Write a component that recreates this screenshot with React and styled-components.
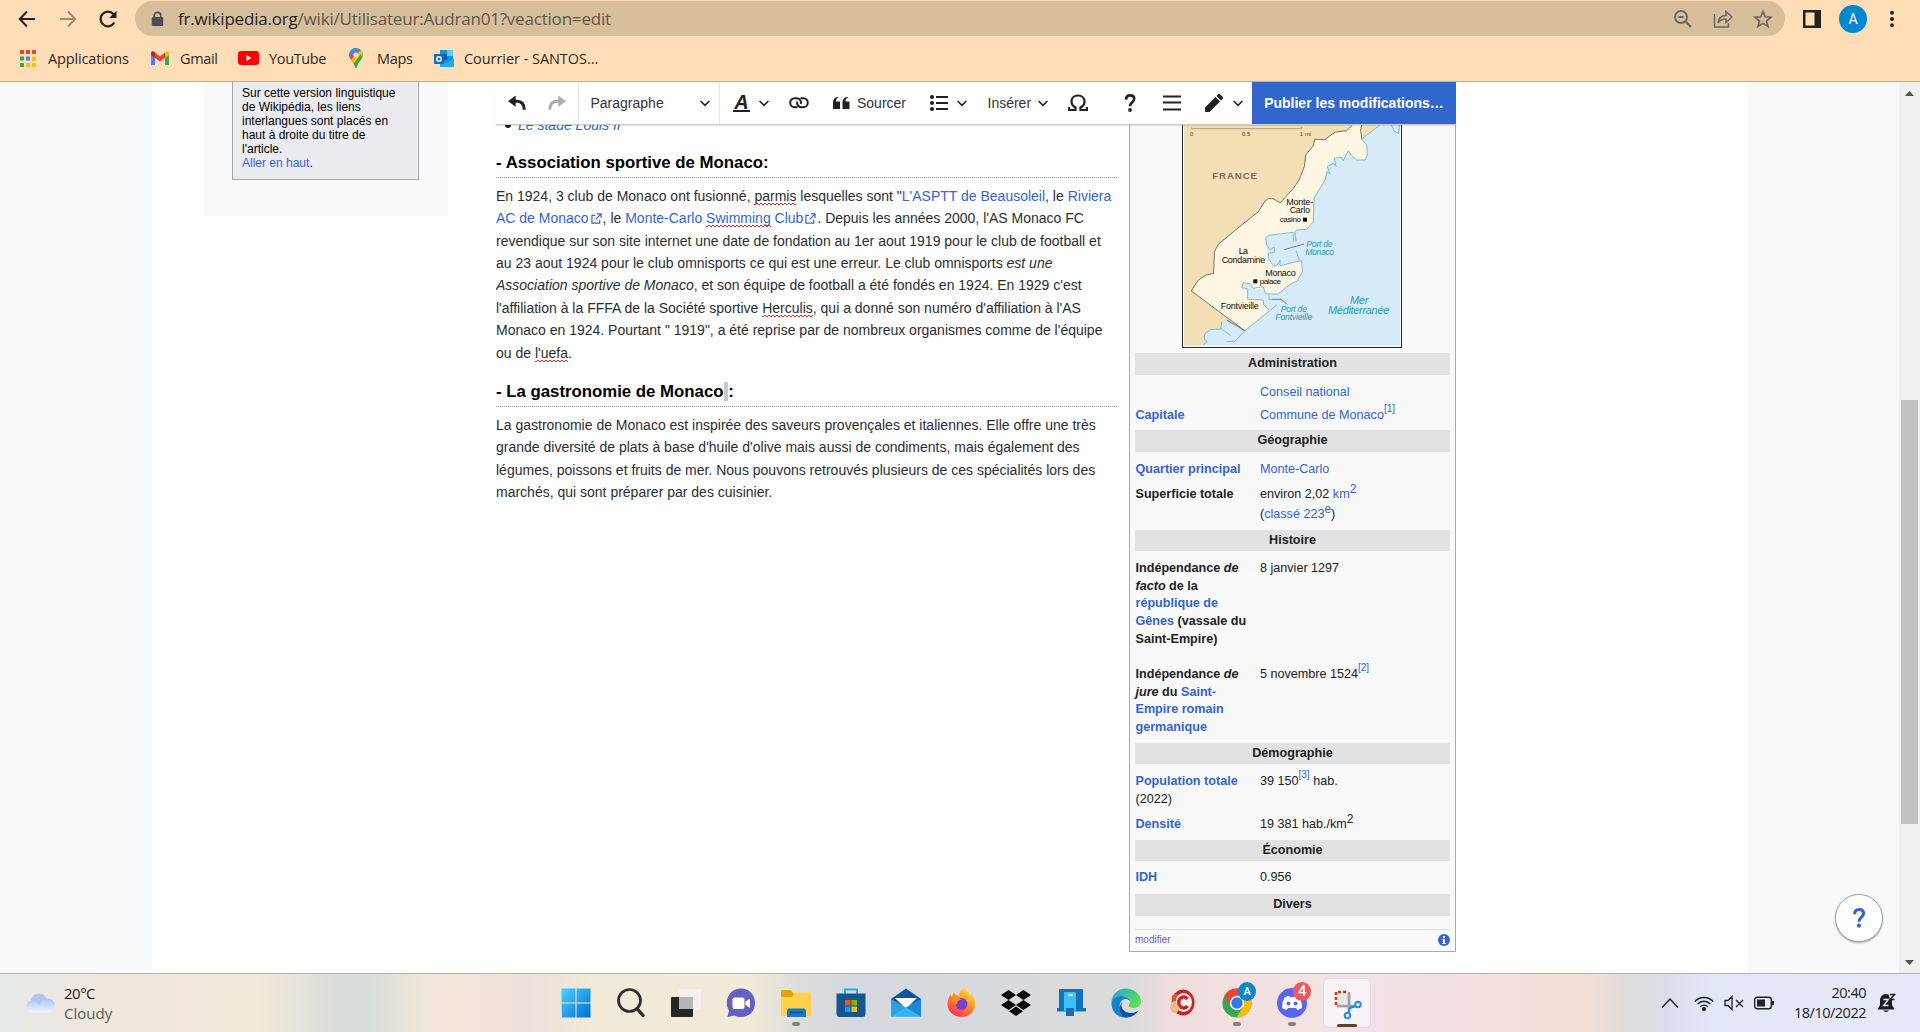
import React from "react";
import styled, { createGlobalStyle, css } from "styled-components";

const GlobalStyle = createGlobalStyle`
  * { box-sizing: border-box; }
  html, body { margin: 0; padding: 0; overflow: hidden; }
  body { font-family: "Liberation Sans", Arial, sans-serif; color: #202122; }
  svg { display: block; flex: none; }
`;

const ui = css`font-family: "Open Sans", "Noto Sans", sans-serif;`;

const Screen = styled.div`
  width: 1920px;
  height: 1032px;
  display: flex;
  flex-direction: column;
  overflow: hidden;
  background: #fff;
`;

/* ---------- Browser chrome ---------- */
const Chrome = styled.header`
  ${ui}
  flex: none;
  height: 82px;
  background: #ffdeb7;
  border-bottom: 1px solid #c9ae8b;
  display: flex;
  flex-direction: column;
`;
const NavBar = styled.div`
  display: flex;
  align-items: center;
  height: 37px;
  padding: 1px 0 1px 7px;
`;
const NavButton = styled.div`
  width: ${(p) => p.$w || 40.5}px;
  flex: none;
  display: flex;
  justify-content: center;
`;
const AddressBar = styled.div`
  display: flex;
  align-items: center;
  flex: none;
  width: 1650px;
  height: 35px;
  margin-left: 6.5px;
  padding: 0 12px 0 15px;
  border-radius: 18px;
  background: #d8bf9c;
`;
const Url = styled.div`
  margin-left: 13px;
  flex: 1;
  font-size: 17px;
  line-height: 34px;
  letter-spacing: ${(p) => p.$ls}px;
  color: #5f574c;
  white-space: nowrap;
  b { font-weight: 400; color: #26231f; }
`;
const AddressActions = styled.div`
  display: flex;
  gap: 20px;
`;
const Avatar = styled.div`
  width: ${(p) => p.$s}px;
  height: ${(p) => p.$s}px;
  border-radius: 50%;
  background: #0288d1;
  color: #fff;
  font: 400 ${(p) => p.$f}px/${(p) => p.$s}px Roboto, sans-serif;
  text-align: center;
`;
const Bookmarks = styled.nav`
  display: flex;
  align-items: center;
  height: 42px;
  padding-left: 18px;
`;
const Bookmark = styled.div`
  display: flex;
  align-items: center;
  gap: ${(p) => p.$gap || 10}px;
  width: ${(p) => p.$w}px;
  font-size: 14.5px;
  letter-spacing: ${(p) => p.$ls ?? -0.35}px;
  color: #2d2a26;
  white-space: nowrap;
`;

/* ---------- Page ---------- */
const Viewport = styled.div`
  flex: 1;
  min-height: 0;
  display: flex;
  background: #f8f9fb;
  padding-left: 152px;
`;
const Page = styled.div`
  width: 1596px;
  background: #fff;
  padding-left: 52px;
  display: flex;
  align-items: flex-start;
  overflow: hidden;
`;
const Sidebar = styled.aside`
  width: 244px;
  height: 134px;
  padding: 0 28px;
  background: #f8f9fa;
  margin-right: 48px;
`;
const Notice = styled.div`
  height: 98px;
  width: 187px;
  padding: 4px 9px;
  border: 1px solid #a2a9b1;
  border-top: 0;
  background: #eaecf0;
  color: #000;
  font-size: 12px;
  line-height: 14px;
  white-space: nowrap;
`;
const A = styled.a`color: #3366cc;`;
const Main = styled.main`
  width: 960px;
  height: 891px;
  display: flex;
  flex-direction: column;
`;
const Toolbar = styled.div`
  flex: none;
  display: flex;
  height: 43px;
  background: #fff;
  border-bottom: 1px solid #c8ccd1;
  box-shadow: 0 1px 1px rgba(0, 0, 0, 0.1);
  position: relative;
  z-index: 1;
`;
const Tool = styled.div`
  display: flex;
  align-items: center;
  width: ${(p) => p.$w}px;
  padding-left: ${(p) => p.$l}px;
  padding-right: ${(p) => p.$r || 0}px;
  border-right: ${(p) => (p.$line ? "1px solid #e4e6ea" : "0")};
  font-size: 14px;
  color: #333;
  white-space: nowrap;
  & > .end { margin-left: auto; }
`;
const ToolText = styled.span`margin-left: ${(p) => p.$ml || 0}px;`;
const StyleGlyph = styled.span`
  width: 17px;
  height: 18px;
  border-bottom: 2px solid #202122;
  font: italic 700 20px/16px "Liberation Sans", sans-serif;
  color: #202122;
  text-align: center;
`;
const Publish = styled.button`
  width: 204px;
  height: 42px;
  border: 0;
  padding: 0;
  background: #3366cc;
  color: #fff;
  font: 700 14px/42px "Liberation Sans", sans-serif;
`;
const Content = styled.div`
  display: flex;
  justify-content: space-between;
  align-items: flex-start;
  flex: 1;
  min-height: 0;
  overflow: hidden;
`;
const Article = styled.article`
  width: 621px;
  font-size: 14px;
  line-height: 22.4px;
  white-space: nowrap;
`;
const Bullet = styled.div`
  display: flex;
  align-items: center;
  gap: 7px;
  margin-top: -11px;
  padding-left: 9px;
  font-style: italic;
  &::before { content: ""; width: 6px; height: 6px; border-radius: 50%; background: #202122; }
`;
const Heading = styled.h3`
  margin: ${(p) => p.$top}px 0 0;
  padding-bottom: 1px;
  border-bottom: 1px dotted #8f9399;
  font-size: 16.8px;
  line-height: 27px;
  color: #000;
`;
const Mark = styled.span`background: #c8c8c8;`;
const Para = styled.p`margin: 6.8px 0 0; color: #2c2d2f;`;
const Typo = styled.span`
  padding-bottom: 1px;
  background-image: linear-gradient(90deg, #f02020 50%, transparent 50%), linear-gradient(90deg, transparent 50%, #f02020 50%);
  background-size: 4px 1px, 4px 1px;
  background-position: 0 100%, 0 calc(100% - 1px);
  background-repeat: repeat-x;
`;
const Ext = styled.svg`
  && { display: inline-block; }
  width: 11px;
  height: 11px;
  margin: 0 1px 0 2px;
  vertical-align: -1px;
`;

/* ---------- Infobox ---------- */
const Infobox = styled.section`
  width: 327px;
  height: 827px;
  padding: 0 5px;
  border: 1px solid #a9abae;
  border-top: 0;
  background: #f9f9f9;
  font-size: 12.6px;
  line-height: 17.7px;
  white-space: nowrap;
`;
const MapFrame = styled.div`
  width: 220px;
  height: 223px;
  margin: 0 0 5px 47px;
  overflow: hidden;
  border: 1px solid #1c2b3a;
  border-top: 0;
`;
const Band = styled.h4`
  margin: 0;
  height: ${(p) => p.$h || 21}px;
  background: #e2e2e2;
  font-size: 12.6px;
  line-height: 20px;
  text-align: center;
`;
const Fact = styled.div`
  display: grid;
  grid-template-columns: 124.5px 1fr;
  height: ${(p) => p.$h}px;
  padding: ${(p) => p.$t}px 0 0 0.5px;
  sup { line-height: 0; font-size: ${(p) => (p.$ref ? 10 : 12)}px; vertical-align: ${(p) => (p.$ref ? 7 : 5)}px; }
`;
const Label = styled.div`font-weight: 700;`;
const Plain = styled.span`font-weight: 400;`;
const Second = styled.div`margin-top: 2.5px;`;
const BoxFooter = styled.div`
  display: flex;
  justify-content: space-between;
  align-items: center;
  margin-top: 13px;
  height: 21px;
  border-top: 1px solid #dddfe1;
  font-size: 10px;
  color: #795cb2;
`;

/* ---------- Right edge ---------- */
const RightGutter = styled.div`
  width: 151px;
  display: flex;
  align-items: flex-end;
  justify-content: flex-end;
  padding: 0 16px 31px 0;
`;
const HelpButton = styled.div`
  width: 48px;
  height: 48px;
  border-radius: 50%;
  border: 1px solid #a2a9b1;
  background: #fff;
  box-shadow: 0 1px 2px rgba(0, 0, 0, 0.35);
  display: flex;
  align-items: center;
  justify-content: center;
`;
const Scrollbar = styled.div`
  width: 21px;
  background: #f0f0f0;
  display: flex;
  flex-direction: column;
  align-items: center;
  justify-content: space-between;
  padding: 9px 0 8px;
`;
const Thumb = styled.div`
  width: 17px;
  height: 424px;
  margin-top: 168px;
  background: #c1c1c1;
`;

/* ---------- Taskbar ---------- */
const Taskbar = styled.footer`
  ${ui}
  flex: none;
  height: 59px;
  border-top: 1px solid #b4b3b2;
  background: linear-gradient(90deg, #e5e9ea 0, #ece7e1 60px, #f1e8dc 140px, #f1e9da 260px, #dadeda 335px, #dadeda 370px, #f0e6d9 425px, #f2e4d8 470px, #ece0dc 530px, #f1ead8 590px, #f1ebd8 750px, #dddddd 800px, #d5d8de 860px, #dadcdc 1130px, #efdedd 1170px, #f4e2e1 1300px, #f1e1ee 1350px, #f3e0e2 1400px, #f4ddd7 1590px, #dedddd 1625px, #dadde8 1660px, #e2e7f7 1710px, #e6e9f8 1920px);
  display: grid;
  grid-template-columns: 548px 827px 1fr;
`;
const Weather = styled.div`
  display: flex;
  align-items: center;
  gap: 9px;
  padding: 0 0 1px 25px;
`;
const TwoLine = styled.div`
  font-size: ${(p) => p.$f || 14.5}px;
  line-height: 20px;
  letter-spacing: ${(p) => p.$ls ?? -0.5}px;
  color: #1d1d1d;
  text-align: ${(p) => p.$align || "left"};
  white-space: nowrap;
  span { color: #5c5a58; letter-spacing: 0; }
`;
const Apps = styled.div`
  display: flex;
  height: 58px;
`;
const AppSlot = styled.div`
  width: 55.1px;
  flex: none;
  height: 58px;
  display: flex;
  flex-direction: column;
  align-items: center;
  padding-top: 14px;
  position: relative;
`;
const Running = styled.i`
  width: 8px;
  height: 4px;
  margin-top: 4px;
  border-radius: 2px;
  background: #85817f;
`;
const Badge = styled.div`
  position: absolute;
  left: 29px;
  top: 8px;
  width: 18px;
  height: 19px;
  border-radius: 50%;
  background: ${(p) => p.$bg};
  color: #fff;
  font: 500 ${(p) => p.$f || 12}px/19px Roboto, sans-serif;
  text-align: center;
`;
const ActiveTile = styled.div`
  width: 48px;
  height: 50px;
  margin-top: -10px;
  padding-top: 10px;
  border: 1px solid #e6dbe2;
  border-radius: 5px;
  background: #f8f1f5;
  display: flex;
  flex-direction: column;
  align-items: center;
  &::after { content: ""; width: 20px; height: 4px; border-radius: 2px; margin-top: 5px; background: #5e4519; }
`;
const Tray = styled.div`
  display: flex;
  align-items: center;
  justify-content: flex-end;
  padding-right: 24px;
`;
const TrayIcons = styled.div`
  display: flex;
  align-items: center;
  gap: ${(p) => p.$gap}px;
  margin-right: ${(p) => p.$r}px;
`;

/* ---------- Small drawings ---------- */
const Chevron = (p) => (
  <svg className="end" width="12" height="12" viewBox="0 0 12 12" {...p}>
    <path d="M1.6 4 6 8.4 10.4 4" fill="none" stroke="#202122" strokeWidth="1.6" />
  </svg>
);
const Question = ({ size = 20, color = "#202122" }) => (
  <svg width={size} height={size} viewBox="0 0 20 20" fill="none" stroke={color} strokeWidth="2.7">
    <path d="M6 6.6C6.1 3.6 7.6 2.3 10.1 2.3c2.600 0 4.100 1.400 4.100 3.700 0 3.200-4.200 3.300-4.200 7.300" />
    <circle cx="10" cy="17" r="1.900" fill={color} stroke="none" />
  </svg>
);
const ExtIcon = () => (
  <Ext viewBox="0 0 12 12" fill="none" stroke="#3366cc" strokeWidth="1.300">
    <path d="M4.500 2.500H1v8.500h8.500V7.500M6.500 1H11v4.500M11 1 5 7" />
  </Ext>
);

function MonacoMap() {
  const border = "L697 30 680 47 645 51 615 74 584 73 580 92 557 120 553 155 537 195 520 220 480 264 462 252 445 250 435 258 415 290 350 342 295 388 283 410 281 475 258 480 235 495 214 528 374 647";
  return (
    <svg width="220" height="236" viewBox="186 -9 660 708" style={{ marginTop: -13, marginLeft: -1 }} fontFamily="Liberation Sans, sans-serif">
      <rect x="186" y="-9" width="660" height="708" fill="#f7f9fb" />
      <rect x="192" y="-9" width="648" height="701" fill="#d7eaf8" />
      <path d={"M192 -9H697" + border + "L320 615 305 628 300 642 272 642 254 658 252 672 262 680 250 692H192Z"} fill="#f3dfb5" />
      <path d="M725 -9H815V30H780L725 72 722 45Z" fill="#f3dfb5" />
      <path d={"M697 -9" + border + "L470 570 447 585 430 568 430 555 383 553 383 522 365 518 370 503 390 506 406 524 430 520 447 540 475 537 510 508 532 498 547 470 545 437 530 440 480 450 462 455 445 430 437 368 445 361 525 352 530 345 560 343 580 320 582 250 615 195 620 150 645 128 670 125 685 107 710 135 735 135 742 120 740 90 725 72 722 45 725 30V-9Z"} fill="#fef6e3" />
      <path d={"M697 -9" + border + "M725 30 722 45 725 72"} fill="none" stroke="#7d7466" strokeWidth="3" />
      <path d="M375 647 470 570M447 585 430 568 430 555 383 553 383 522 365 518 370 503 390 506 400 520 430 515 436 535 447 537 447 553 456 553M447 537 475 537 510 508 532 498 547 470 545 437 530 440 480 452 480 435 474 447 462 455 445 430 445 415 464 412 462 396 450 404 440 390 437 368 445 361 520 352 520 380M528 380 525 350 530 345 560 343 580 320 582 250 615 195 622 170 630 178 622 155 640 145 648 155 643 130 663 126 670 137 678 120 685 107 695 122 710 135 735 135 742 120 740 90 725 72 780 30M528 406 538 435M815 30 822 48 836 56 838 30M305 620 303 642 270 644 254 658 252 672 262 680 250 690M303 640 332 662M320 680 346 678 374 648" fill="none" stroke="#7dbdd0" strokeWidth="3" />
      <path d="M493 404 552 387M456 553H483L502 568M320 615 374 647" stroke="#4c6c82" strokeWidth="2.500" fill="none" />
      <path d="M215 36V41H545V36" fill="none" stroke="#8d8068" strokeWidth="2" />
      <g fontSize="18" fill="#4c4437">
        <text x="210" y="62">0</text><text x="366" y="62">0.5</text><text x="539" y="62">1 mi</text>
      </g>
      <text x="277" y="193" fontSize="29" fontWeight="700" fill="#786d58" textLength="134">FRANCE</text>
      <g fontSize="27" fill="#111">
        <text x="499" y="269" textLength="80">Monte-</text>
        <text x="509" y="294" textLength="61">Carlo</text>
        <text x="479" y="321" fontSize="24" textLength="64">casino</text>
        <text x="356" y="417" textLength="28">La</text>
        <text x="305" y="443" textLength="131">Condamine</text>
        <text x="436" y="484" textLength="91">Monaco</text>
        <text x="419" y="506" fontSize="24" textLength="64">palace</text>
        <text x="302" y="581" textLength="114">Fontvieille</text>
        <rect x="549" y="308" width="12" height="12" /><rect x="400" y="493" width="12" height="12" />
      </g>
      <g fontSize="26" fontStyle="italic" fill="#2c9cb8">
        <text x="559" y="395" textLength="79">Port de</text>
        <text x="556" y="419" textLength="86">Monaco</text>
        <text x="482" y="592" textLength="79">Port de</text>
        <text x="466" y="616" textLength="111">Fontvieille</text>
        <text x="690" y="567" fontSize="33" textLength="55">Mer</text>
        <text x="624" y="598" fontSize="33" textLength="184">Méditerranée</text>
      </g>
    </svg>
  );
}

const AppIcons = {
  start: (
    <svg width="30" height="30" viewBox="0 0 30 30">
      <defs><linearGradient id="win" x1="0" y1="0" x2="1" y2="1"><stop offset="0" stopColor="#4fd2ff" /><stop offset="1" stopColor="#006fd0" /></linearGradient></defs>
      <path fill="url(#win)" d="M1 .5H14.500V14.500H.5V1zM15.500 .5H29.500V14.500H15.500zM.5 15.500H14.500V29.500H1zM15.500 15.500H29.500V29.500H15.500z" />
    </svg>
  ),
  search: (
    <svg width="30" height="30" viewBox="0 0 30 30" fill="none" stroke="#2c2c2e" strokeLinecap="round">
      <circle cx="13.500" cy="12.500" r="11" strokeWidth="2.700" /><path d="M21 20.500 27 27.500" strokeWidth="3.400" />
    </svg>
  ),
  tasks: (
    <svg width="30" height="30" viewBox="0 0 30 30">
      <rect x="0" y="9" width="22" height="20" rx="1" fill="#262626" /><rect x="8" y="1" width="22" height="20" rx="1" fill="#f1f1f1" /><path d="M8 9H22V21H8z" fill="#b6b6b6" />
    </svg>
  ),
  chat: (
    <svg width="30" height="30" viewBox="0 0 30 30">
      <path d="M15 .5C23 .5 29 6.500 29 15s-6 14-14 14c-2.500 0-4.500-.5-6.500-1.600L1.500 29 3 22.500C1.700 20.500.8 18 .8 15 .8 6.500 7 .5 15 .5z" fill="#6460c4" />
      <rect x="6.500" y="9.500" width="12" height="11.500" rx="2" fill="#fff" /><path d="M19.500 13.500 24 10.500V20L19.500 17z" fill="#fff" />
    </svg>
  ),
  files: (
    <svg width="30" height="30" viewBox="0 0 30 30">
      <path d="M0 4a2 2 0 0 1 2-2h8l3 4H28V14H0z" fill="#e2a40c" /><path d="M0 9H11l3-4.500H30V28H0z" fill="#ffd04b" /><path d="M6 29v-6.500a2 2 0 0 1 2-2H23a2 2 0 0 1 2 2V29z" fill="#1979c4" /><path d="M9 24.500H22" stroke="#0b4d91" strokeWidth="1.500" />
    </svg>
  ),
  store: (
    <svg width="30" height="30" viewBox="0 0 30 30">
      <path d="M9 7V1.500H21V7" fill="none" stroke="#27aee8" strokeWidth="2" /><path d="M.5 5.500H29.500V26a3 3 0 0 1-3 3H3.500a3 3 0 0 1-3-3z" fill="#17558f" />
      <path d="M9 12H14.500V17.500H9z" fill="#f25022" /><path d="M15.500 12H21V17.500H15.500z" fill="#7fba00" /><path d="M9 18.500H14.500V24H9z" fill="#00a4ef" /><path d="M15.500 18.500H21V24H15.500z" fill="#ffb900" />
    </svg>
  ),
  mail: (
    <svg width="30" height="30" viewBox="0 0 30 30">
      <path d="M0 11 15 .5 30 11V20H0z" fill="#0b55a5" /><path d="M4 10H26L15 21z" fill="#fff" /><path d="M0 11 30 28.500H0z" fill="#2aa2e6" /><path d="M30 11V28.500H0L30 11z" fill="#36b4f2" /><path d="M15 19.500 30 28.500V11z" fill="#1e88d6" />
    </svg>
  ),
  firefox: (
    <svg width="30" height="30" viewBox="0 0 30 30">
      <defs><linearGradient id="fox" x1=".8" y1="0" x2=".2" y2="1"><stop offset="0" stopColor="#ffe540" /><stop offset=".5" stopColor="#ff8620" /><stop offset="1" stopColor="#ff2560" /></linearGradient></defs>
      <path d="M18 0c4 3 5 5 6 8 1-.5 1-2 .8-3 3 3.500 4.200 7 4.200 11 0 8-6 13-13.500 13S1.500 23.500 1.500 16c0-4 1.500-7 3-10l1 3.500L8 4.500c1 2 2.500 3 5 3.300C13 5 15 2 18 0z" fill="url(#fox)" />
      <circle cx="15.500" cy="16" r="6" fill="#7b3fd0" /><path d="M6 11c4-3 8-1.500 9 .8-3 .2-4 1.700-3.500 4C9 17 6 15 6 11z" fill="#ff8a1f" />
    </svg>
  ),
  dropbox: (
    <svg width="30" height="30" viewBox="0 0 30 30">
      <path d="M7.500 2 15 7 7.500 12 0 7zM22.500 2 30 7 22.500 12 15 7zM7.500 12 15 17 7.500 22 0 17zM22.500 12 30 17 22.500 22 15 17zM15 18.500 22 23.300 15 28 8 23.300z" fill="#0a0a0a" />
    </svg>
  ),
  phone: (
    <svg width="30" height="30" viewBox="0 0 30 30">
      <path d="M3 2a1 1 0 0 1 1-1H26a1 1 0 0 1 1 1V20H30V23.500H1V20H3z" fill="#1273bd" /><rect x="8" y="4" width="12" height="19" rx="1" fill="#3cc0f5" /><path d="M10 20H18V28H10z" fill="#1b6ba8" /><path d="M12 7H17" stroke="#fff" strokeWidth="1.500" />
    </svg>
  ),
  edge: (
    <svg width="30" height="30" viewBox="0 0 30 30">
      <defs><linearGradient id="edg" x1="0" y1="0" x2="1" y2=".5"><stop offset="0" stopColor="#1aa5df" /><stop offset="1" stopColor="#5fdc55" /></linearGradient></defs>
      <path d="M.5 15C.5 6 7 .5 15 .5S30 7 30 13c0 5-4 7-7.500 7-3 0-5-1-5-2.500 0-1 1.500-1.500 1.500-4C19 10 16 8 12 8 6 8 1 12 .5 15z" fill="url(#edg)" />
      <path d="M.5 15C1.500 10.500 6 8 11 8c5 0 8 3 8 5.500-1-2-3-2.500-4.500-2.500-4 0-6.500 4-5.500 8.500S15 28 19 28c-2 1-4 1.500-5 1.500C6 29.500.2 23 .5 15z" fill="#1482cf" />
      <path d="M11 14c-2 5 1 10.500 8 11 4 .3 7-1.500 8.500-2.500C25 27 20 29.500 15 29.500 9 29 7 18 11 14z" fill="#10509c" />
    </svg>
  ),
  ccleaner: (
    <svg width="30" height="30" viewBox="0 0 30 30">
      <ellipse cx="16" cy="14.500" rx="11.500" ry="13" fill="#c92222" /><ellipse cx="16.500" cy="14.500" rx="8.500" ry="9.500" fill="#f5efee" />
      <path d="M20.500 11a5 5.500 0 1 0 0 7" fill="none" stroke="#c92222" strokeWidth="3.400" /><path d="M3 19 5 8 9 6 9 15 13 20 9 26C5 24 3 22 3 19z" fill="#efb88a" /><path d="M5 8 10 5 9 13 5 14z" fill="#d9532f" />
    </svg>
  ),
  chrome: (
    <svg width="30" height="30" viewBox="0 0 30 30">
      <circle cx="15" cy="15" r="14.500" fill="#34a853" /><path d="M2.400 7.800A14.500 14.500 0 0 1 27.600 7.800H15z" fill="#ea4335" /><path d="M2.400 7.800 9 19 15 7.800z" fill="#ea4335" /><path d="M27.600 7.800A14.500 14.500 0 0 1 14.500 29.500L21.500 18 15 7.800z" fill="#fbbc04" />
      <circle cx="15" cy="15" r="7.200" fill="#fff" /><circle cx="15" cy="15" r="5.700" fill="#3079e8" />
    </svg>
  ),
  discord: (
    <svg width="30" height="30" viewBox="0 0 30 30">
      <circle cx="15" cy="15" r="15" fill="#5865f2" />
      <path d="M7.500 9.500C9.500 8.300 11.500 8 12.500 8l.6 1.200h3.800L17.500 8c1 0 3 .3 5 1.500 2 3.500 2.700 7 2.300 10.500-1.500 1.200-3 1.800-4.500 2l-1.200-2H11l-1.200 2c-1.500-.2-3-.8-4.500-2C4.900 16.500 5.500 13 7.500 9.500z" fill="#fff" /><circle cx="11.500" cy="15.500" r="2" fill="#5865f2" /><circle cx="18.500" cy="15.500" r="2" fill="#5865f2" />
    </svg>
  ),
  snip: (
    <svg width="30" height="30" viewBox="0 0 30 30">
      <rect x="5" y="4" width="14" height="15" fill="#e9e9ec" /><path d="M4 16V3H16" fill="none" stroke="#d83b01" strokeWidth="2.600" strokeDasharray="3 2" />
      <path d="M17 3V21M5 17H24" stroke="#9da0a6" strokeWidth="2.600" /><g fill="none" stroke="#1f8fd6" strokeWidth="2"><circle cx="26" cy="15.500" r="2.700" /><circle cx="15.500" cy="26.500" r="2.700" /><path d="M23.500 17 18 19M16.500 24 18 18" /></g>
    </svg>
  ),
};

const slots = [
  ["start"], ["search"], ["tasks"], ["chat"], ["files", true], ["store"], ["mail"], ["firefox"],
  ["dropbox"], ["phone"], ["edge"], ["ccleaner"], ["chrome", true, "A", "#0b87cf"], ["discord", true, "4", "#f0575b"],
];

export default function App() {
  return (
    <Screen>
      <GlobalStyle />
      <Chrome>
        <NavBar>
          <NavButton>
            <svg width="18" height="18" viewBox="0 0 18 18" fill="none" stroke="#222" strokeWidth="2"><path d="M17 9H2M9 1.500 1.700 9 9 16.500" /></svg>
          </NavButton>
          <NavButton>
            <svg width="18" height="18" viewBox="0 0 18 18" fill="none" stroke="#9b8a75" strokeWidth="1.900"><path d="M1 9H16M9 1.500 16.300 9 9 16.500" /></svg>
          </NavButton>
          <NavButton>
            <svg width="18" height="18" viewBox="0 0 18 18"><path d="M15.300 12.500A7.300 7.300 0 1 1 14.500 4.300" fill="none" stroke="#222" strokeWidth="2.200" /><path d="M17.500.8V8H10.300z" fill="#222" /></svg>
          </NavButton>
          <AddressBar>
            <svg width="15" height="16" viewBox="0 0 15 16"><path d="M4.300 7V4.500a3.200 3.200 0 0 1 6.400 0V7" fill="none" stroke="#4d4e54" strokeWidth="1.700" /><rect x="1.800" y="6" width="11.400" height="9" rx="1.300" fill="#4d4e54" /></svg>
            <Url $ls={-0.2}><b>fr.wikipedia.org</b>/wiki/Utilisateur:Audran01?veaction=edit</Url>
            <AddressActions>
              <svg width="20" height="20" viewBox="0 0 20 20" fill="none" stroke="#6a6865" strokeWidth="1.900"><circle cx="8" cy="8" r="6" /><path d="M12.500 12.500 18 18M5.500 8H10.500" /></svg>
              <svg width="20" height="20" viewBox="0 0 20 20" fill="none" stroke="#6a6865" strokeWidth="1.500"><path d="M1.500 5V18H15.500V14M5 14C5.500 8.500 8.500 6.500 13 6.500V2.500L19 8 13 13.500V10C9.500 10 7 11 5 14z" /></svg>
              <svg width="20" height="20" viewBox="0 0 20 20" fill="none" stroke="#6a6865" strokeWidth="1.700"><path d="M10 2.500 12.200 7.800 18 8.200 13.500 12 15 17.500 10 14.400 5 17.500 6.500 12 2 8.200 7.800 7.800z" /></svg>
            </AddressActions>
          </AddressBar>
          <NavButton $w={54}>
            <svg width="18" height="18" viewBox="0 0 18 18"><path d="M0 0H18V18H0zM2.500 2.500V15.500H11.500V2.500z" fill="#222" fillRule="evenodd" /></svg>
          </NavButton>
          <NavButton $w={28}><Avatar $s={28} $f={14}>A</Avatar></NavButton>
          <NavButton $w={50}>
            <svg width="6" height="18" viewBox="0 0 6 18" fill="#222"><circle cx="3" cy="2.800" r="2" /><circle cx="3" cy="9" r="2" /><circle cx="3" cy="15.200" r="2" /></svg>
          </NavButton>
        </NavBar>
        <Bookmarks>
          <Bookmark $w={132} $ls={-0.15}>
            <svg width="20" height="20" viewBox="0 0 20 20">
              {["#ea4335", "#ea4335", "#ea4335", "#34a853", "#4285f4", "#fbbc04", "#34a853", "#fbbc04", "#fbbc04"].map((c, i) => (
                <rect key={i} x={2 + (i % 3) * 6} y={2 + Math.floor(i / 3) * 6.500} width="4" height="4" fill={c} />
              ))}
            </svg>
            Applications
          </Bookmark>
          <Bookmark $w={88}>
            <svg width="20" height="16" viewBox="0 0 20 16"><path d="M1 3V15H5V7z" fill="#4285f4" /><path d="M19 3V15H15V7z" fill="#34a853" /><path d="M5 2.500V8L10 11.500 15 8V2.500L10 6.500z" fill="#ea4335" /><path d="M1 3.500C1 1 3 .5 5 2.200V8L1 5z" fill="#c5221f" /><path d="M19 3.500C19 1 17 .5 15 2.200V8L19 5z" fill="#fbbc04" /></svg>
            Gmail
          </Bookmark>
          <Bookmark $w={108}>
            <svg width="21" height="14" viewBox="0 0 21 14"><rect width="21" height="14" rx="3" fill="#f00" /><path d="M8.500 4V10L13.500 7z" fill="#fff" /></svg>
            YouTube
          </Bookmark>
          <Bookmark $w={88} $gap={11}>
            <svg width="20" height="20" viewBox="0 0 20 20"><path d="M10 0a6.800 6.800 0 0 1 6.800 7C16.800 12 12 13 10.500 20h-1C8.500 14 3.200 12 3.200 7A6.800 6.800 0 0 1 10 0z" fill="#34a853" /><path d="M10 0C5 0 3.200 4 3.200 7L5 11 14.500 2z" fill="#4285f4" /><path d="M3.300 6c-.2 2 .8 4 2 5.800L9 8z" fill="#ea4335" /><path d="M5 11.500 14.800 2.200C17 4 17 7.500 16 9.500L8 15.500z" fill="#fbbc04" /><path d="M16 9.500C14 13 11.500 14 10.500 20h-1L8 15.500 15 6z" fill="#34a853" /><circle cx="10" cy="7" r="2.600" fill="#ffddb4" /></svg>
            Maps
          </Bookmark>
          <Bookmark $w={180} $ls={-0.05}>
            <svg width="20" height="19" viewBox="0 0 20 19"><path d="M6 1H19V14H6z" fill="#1490df" /><path d="M13 1H19V7H13z" fill="#50d0fb" /><path d="M6 5H13V11H6z" fill="#0a5cab" /><path d="M6 18V11L12.500 14 20 9.500V18z" fill="#28a8ea" /><rect y="5" width="10" height="10" rx="1" fill="#0f6cbd" /><circle cx="5" cy="10" r="2.300" fill="none" stroke="#fff" strokeWidth="1.500" /></svg>
            Courrier - SANTOS...
          </Bookmark>
        </Bookmarks>
      </Chrome>

      <Viewport>
        <Page>
          <Sidebar>
            <Notice>
              Sur cette version linguistique<br />de Wikipédia, les liens<br />interlangues sont placés en<br />haut à droite du titre de<br />l'article.<br /><A>Aller en haut</A>.
            </Notice>
          </Sidebar>
          <Main>
            <Toolbar>
              <Tool $w={43} $l={11}>
                <svg width="20" height="20" viewBox="0 0 20 20"><path d="M1 8.200 8.700 2.500V13.800z" fill="#202122" /><path d="M8 8.200H10c5 0 7.200 3 7.200 8.500" fill="none" stroke="#202122" strokeWidth="3" /></svg>
              </Tool>
              <Tool $w={40} $l={8} $line>
                <svg width="20" height="20" viewBox="0 0 20 20"><path d="M19 8.200 11.300 2.500V13.800z" fill="#aeaeaf" /><path d="M12 8.200H10c-5 0-7.200 3-7.200 8.500" fill="none" stroke="#aeaeaf" strokeWidth="3" /></svg>
              </Tool>
              <Tool $w={141} $l={11.5} $r={8} $line>Paragraphe<Chevron /></Tool>
              <Tool $w={61} $l={13} $r={11}><StyleGlyph>A</StyleGlyph><Chevron /></Tool>
              <Tool $w={40} $l={8}>
                <svg width="20" height="20" viewBox="0 0 20 20" fill="none" stroke="#202122" strokeWidth="2"><path d="M8.500 14.200H5.700a4.500 4.500 0 0 1 0-9H7.500A4.500 4.500 0 0 1 11.800 11M11.500 5.200H14.300a4.500 4.500 0 0 1 0 9H12.500A4.500 4.500 0 0 1 8.200 8.500" /></svg>
              </Tool>
              <Tool $w={96} $l={11}>
                <svg width="18" height="14" viewBox="0 0 18 14" fill="#202122"><path d="M7 1C4.500 2 4 4 4 5.500H8V13H1V6.500C1 3 3 1 7 1zM16.500 1c-2.500 1-3 3-3 4.500h4V13h-7V6.500C10.500 3 12.500 1 16.500 1z" /></svg>
                <ToolText $ml={7}>Sourcer</ToolText>
              </Tool>
              <Tool $w={60} $l={12} $r={9}>
                <svg width="20" height="20" viewBox="0 0 20 20" fill="#202122"><circle cx="3" cy="4" r="2.100" /><circle cx="3" cy="10" r="2.100" /><circle cx="3" cy="16" r="2.100" /><path d="M7 3H19V5H7zM7 9H19V11H7zM7 15H19V17H7z" /></svg>
                <Chevron />
              </Tool>
              <Tool $w={81} $l={10.5} $r={9}>Insérer<Chevron /></Tool>
              <Tool $w={52} $l={10}>
                <svg width="20" height="20" viewBox="0 0 20 20"><path d="M1 14V17H7.500V14.500C4.500 13 3.500 11 3.500 8.500 3.500 5 6 2.500 10 2.500s6.500 2.500 6.500 6c0 2.500-1 4.500-4 6V17H19V14" fill="none" stroke="#202122" strokeWidth="2.200" /></svg>
              </Tool>
              <Tool $w={42} $l={10}><Question /></Tool>
              <Tool $w={42} $l={10}>
                <svg width="20" height="20" viewBox="0 0 20 20" fill="#202122"><path d="M1 3H19V5H1zM1 9H19V11H1zM1 16H19V18H1z" transform="translate(0 -.5)" /></svg>
              </Tool>
              <Tool $w={58} $l={10} $r={8}>
                <svg width="20" height="20" viewBox="0 0 20 20" fill="#202122"><path d="M1 19V14.500L11.500 4 16 8.500 5.500 19zM12.500 3 14.500 1Q15 .5 15.700 1L19 4.300Q19.500 5 19 5.500L17 7.500z" /></svg>
                <Chevron />
              </Tool>
              <Publish>Publier les modifications…</Publish>
            </Toolbar>
            <Content>
              <Article>
                <Bullet><A>Le stade Louis II</A></Bullet>
                <Heading $top={12.6}>- Association sportive de Monaco:</Heading>
                <Para>
                  En 1924, 3 club de Monaco ont fusionné, <Typo>parmis</Typo> lesquelles sont "<A>L'ASPTT de Beausoleil</A>, le <A>Riviera</A><br />
                  <A>AC de Monaco<ExtIcon /></A>, le <A>Monte-Carlo <Typo>Swimming</Typo> Club<ExtIcon /></A>. Depuis les années 2000, l'AS Monaco FC<br />
                  revendique sur son site internet une date de fondation au 1er aout 1919 pour le club de football et<br />
                  au 23 aout 1924 pour le club omnisports ce qui est une erreur. Le club omnisports <i>est une</i><br />
                  <i>Association sportive de Monaco</i>, et son équipe de football a été fondés en 1924. En 1929 c'est<br />
                  l'affiliation à la FFFA de la Société sportive <Typo>Herculis</Typo>, qui a donné son numéro d'affiliation à l'AS<br />
                  Monaco en 1924. Pourtant " 1919", a été reprise par de nombreux organismes comme de l'équipe<br />
                  ou de <Typo>l'uefa</Typo>.
                </Para>
                <Heading $top={14}>- La gastronomie de Monaco<Mark>&nbsp;</Mark>:</Heading>
                <Para>
                  La gastronomie de Monaco est inspirée des saveurs provençales et italiennes. Elle offre une très<br />
                  grande diversité de plats à base d'huile d'olive mais aussi de condiments, mais également des<br />
                  légumes, poissons et fruits de mer. Nous pouvons retrouvés plusieurs de ces spécialités lors des<br />
                  marchés, qui sont préparer par des cuisinier.
                </Para>
              </Article>
              <Infobox>
                <MapFrame><MonacoMap /></MapFrame>
                <Band $h={22}>Administration</Band>
                <Fact $h={30} $t={9}><Label /><div><A>Conseil national</A></div></Fact>
                <Fact $h={25} $t={2} $ref><Label><A>Capitale</A></Label><div><A>Commune de Monaco<sup>[1]</sup></A></div></Fact>
                <Band $h={22}>Géographie</Band>
                <Fact $h={28} $t={9}><Label><A>Quartier principal</A></Label><div><A>Monte-Carlo</A></div></Fact>
                <Fact $h={50} $t={6}><Label>Superficie totale</Label><div>environ 2,02 <A>km<sup>2</sup></A><Second>(<A>classé 223<sup>e</sup></A>)</Second></div></Fact>
                <Band>Histoire</Band>
                <Fact $h={106} $t={9}>
                  <Label>Indépendance <i>de</i><br /><i>facto</i> de la<br /><A>république de</A><br /><A>Gênes</A> (vassale du<br />Saint-Empire)</Label>
                  <div>8 janvier 1297</div>
                </Fact>
                <Fact $h={86} $t={9} $ref>
                  <Label>Indépendance <i>de</i><br /><i>jure</i> du <A>Saint-</A><br /><A>Empire romain</A><br /><A>germanique</A></Label>
                  <div>5 novembre 1524<A><sup>[2]</sup></A></div>
                </Fact>
                <Band>Démographie</Band>
                <Fact $h={45} $t={9} $ref><Label><A>Population totale</A><br /><Plain>(2022)</Plain></Label><div>39 150<A><sup>[3]</sup></A> hab.</div></Fact>
                <Fact $h={31} $t={7}><Label><A>Densité</A></Label><div>19 381 hab./km<sup>2</sup></div></Fact>
                <Band>Économie</Band>
                <Fact $h={33} $t={8}><Label><A>IDH</A></Label><div>0.956</div></Fact>
                <Band $h={22}>Divers</Band>
                <BoxFooter>
                  modifier
                  <svg width="12" height="12" viewBox="0 0 12 12"><circle cx="6" cy="6" r="6" fill="#3366cc" /><path d="M5 2H7V4H5zM4 5H7V9H8V10H4V9H5V6H4z" fill="#fff" /></svg>
                </BoxFooter>
              </Infobox>
            </Content>
          </Main>
        </Page>
        <RightGutter>
          <HelpButton><Question size={22} color="#3366cc" /></HelpButton>
        </RightGutter>
        <Scrollbar>
          <svg width="9" height="5" viewBox="0 0 9 5"><path d="M0 5 4.500 0 9 5z" fill="#505050" /></svg>
          <Thumb />
          <svg width="9" height="5" viewBox="0 0 9 5"><path d="M0 0 4.500 5 9 0z" fill="#505050" /></svg>
        </Scrollbar>
      </Viewport>

      <Taskbar>
        <Weather>
          <svg width="30" height="20" viewBox="0 0 30 20">
            <defs><linearGradient id="cl" x1="0" y1="0" x2="0" y2="1"><stop offset="0" stopColor="#a9c4ee" /><stop offset="1" stopColor="#eef4fc" /></linearGradient></defs>
            <circle cx="14" cy="8.500" r="8" fill="#aec7ef" /><path d="M7 19.500A6 6 0 0 1 7 7.500C11 7.500 13 10 15 12 17 7 20 5.500 23 5.500a7 7 0 0 1 0 14z" fill="url(#cl)" />
          </svg>
          <TwoLine $f={15}>20°C<br /><span>Cloudy</span></TwoLine>
        </Weather>
        <Apps>
          {slots.map(([name, running, badge, bg]) => (
            <AppSlot key={name}>
              {AppIcons[name]}
              {running && <Running />}
              {badge && <Badge $bg={bg} $f={badge === "4" ? 15 : 11}>{badge}</Badge>}
            </AppSlot>
          ))}
          <AppSlot><ActiveTile>{AppIcons.snip}</ActiveTile></AppSlot>
        </Apps>
        <Tray>
          <TrayIcons $gap={10} $r={20}>
            <svg width="18" height="12" viewBox="0 0 18 12" style={{ marginRight: 5 }}><path d="M1 10.500 9 2 17 10.500" fill="none" stroke="#222" strokeWidth="1.500" /></svg>
            <svg width="20" height="16" viewBox="0 0 20 16" fill="none" stroke="#222" strokeWidth="1.400"><path d="M.8 6.500a12.500 12.500 0 0 1 18.400 0M3.500 9a9 9 0 0 1 13 0M6.200 11.700a5.300 5.300 0 0 1 7.600 0" /><circle cx="10" cy="14" r="1.400" fill="#222" /></svg>
            <svg width="20" height="16" viewBox="0 0 20 16" fill="none" stroke="#222" strokeWidth="1.300"><path d="M1 5.500H4L8 1.500V14.500L4 10.500H1zM12 5 19 12M19 5 12 12" /></svg>
            <svg width="20" height="14" viewBox="0 0 20 14"><rect x=".7" y="1.200" width="16.600" height="11.600" rx="2.500" fill="none" stroke="#222" strokeWidth="1.400" /><rect x="3" y="3.500" width="8" height="7" fill="#222" /><path d="M18 5H20V9H18z" fill="#222" /></svg>
          </TrayIcons>
          <TwoLine $align="right" $ls={-0.5}>20:40<br />18/10/2022</TwoLine>
          <svg width="18" height="20" viewBox="0 0 18 20" style={{ marginLeft: 12 }}>
            <path d="M2 7a6 6 0 0 1 12 0V12L16 15.500V16.500H0V15.500L2 12z" fill="#1d1d1f" /><path d="M5 17.500H11Q8 20.500 5 17.500z" fill="#1d1d1f" />
            <path d="M5.500 6.500H10.500L5.500 12.500H10.500" fill="none" stroke="#e6e9f8" strokeWidth="1.300" /><path d="M10.500 0H18V7H12z" fill="#e6e9f8" /><path d="M12 1.500H16.500L12 6.500H16.500" fill="none" stroke="#1d1d1f" strokeWidth="1.400" />
          </svg>
        </Tray>
      </Taskbar>
    </Screen>
  );
}
